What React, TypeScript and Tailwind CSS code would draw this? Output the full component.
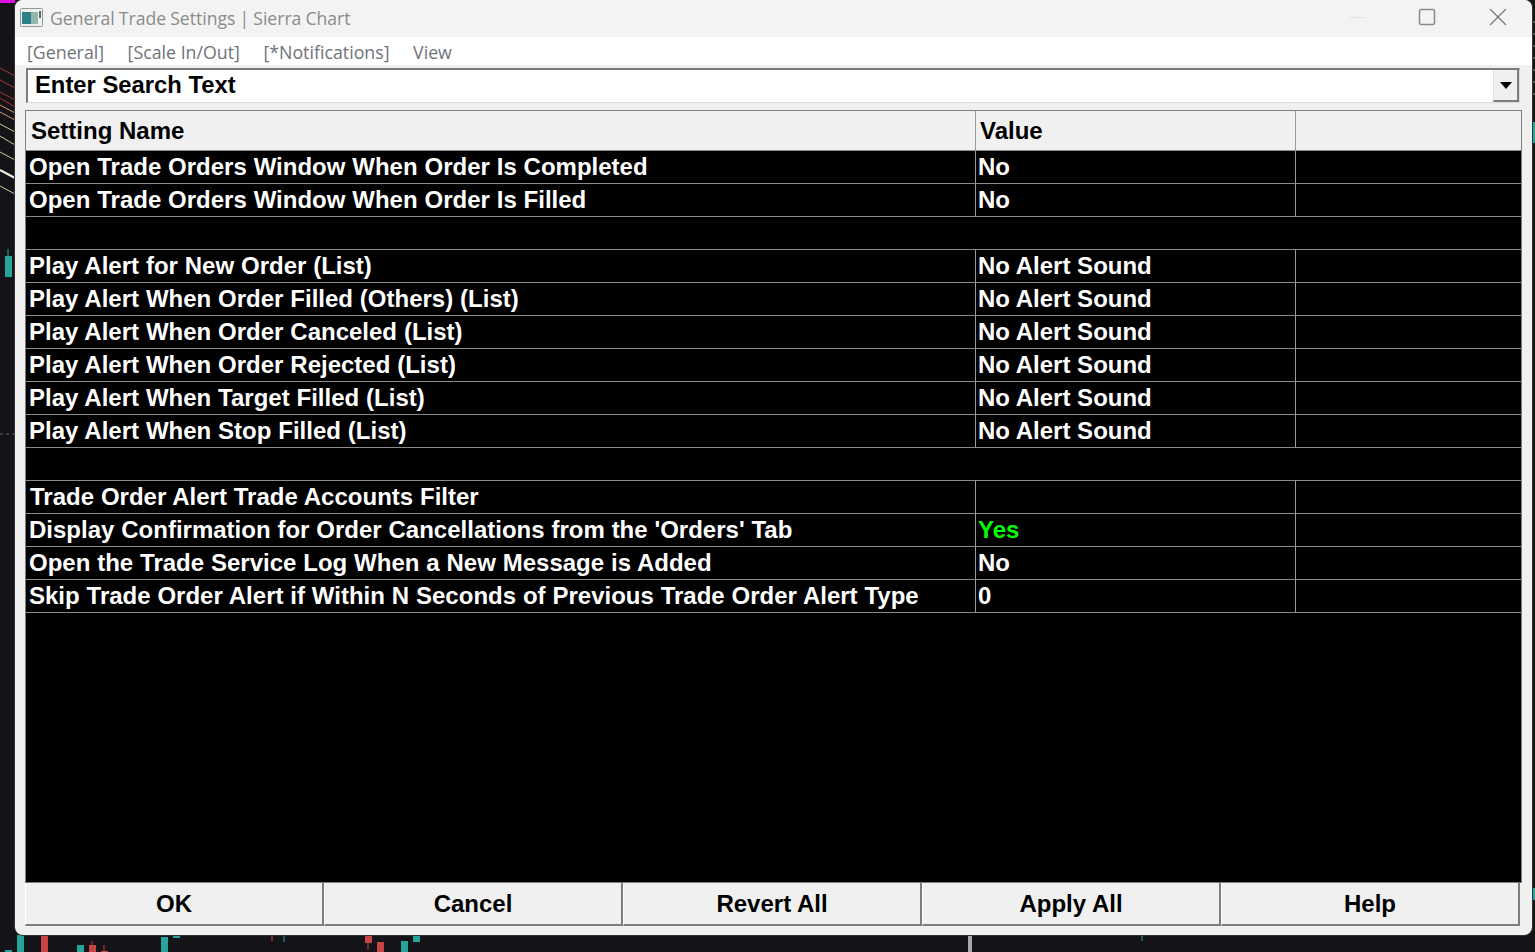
import { Square, X } from 'lucide-react';

type Row = { name: string; value?: string; green?: boolean; indent?: boolean };

const rows: (Row | null)[] = [
  { name: 'Open Trade Orders Window When Order Is Completed', value: 'No' },
  { name: 'Open Trade Orders Window When Order Is Filled', value: 'No' },
  null,
  { name: 'Play Alert for New Order (List)', value: 'No Alert Sound' },
  { name: 'Play Alert When Order Filled (Others) (List)', value: 'No Alert Sound' },
  { name: 'Play Alert When Order Canceled (List)', value: 'No Alert Sound' },
  { name: 'Play Alert When Order Rejected (List)', value: 'No Alert Sound' },
  { name: 'Play Alert When Target Filled (List)', value: 'No Alert Sound' },
  { name: 'Play Alert When Stop Filled (List)', value: 'No Alert Sound' },
  null,
  { name: 'Trade Order Alert Trade Accounts Filter', indent: true },
  { name: "Display Confirmation for Order Cancellations from the 'Orders' Tab", value: 'Yes', green: true },
  { name: 'Open the Trade Service Log When a New Message is Added', value: 'No' },
  { name: 'Skip Trade Order Alert if Within N Seconds of Previous Trade Order Alert Type', value: '0' },
];

const buttons = ['OK', 'Cancel', 'Revert All', 'Apply All', 'Help'];

// chart bits peeking out around the dialog
function ChartBackdrop() {
  return (
    <svg className="absolute inset-0" width="1535" height="952">
      <path d="M0 0 H15 V3 H0 Z" fill="#e010e0" />
      <path d="M0 68 L15 76 M0 80 L15 88 M0 92 L15 100 M0 98 L15 107" stroke="#a33" strokeWidth="1" />
      <path d="M0 105 L15 113 M0 112 L15 120" stroke="#d96" strokeWidth="1" />
      <path d="M0 124 L15 132 M0 136 L15 145 M0 152 L15 160 M0 186 L15 194" stroke="#cc9" strokeWidth="1" />
      <path d="M0 170 L15 178" stroke="#eed" strokeWidth="2" />
      <rect x="5" y="256" width="7" height="21" fill="#26a69a" />
      <path d="M8 249 V256" stroke="#26a69a" />
      <path d="M0 434 H15" stroke="#666" strokeDasharray="3 3" />
      <rect x="5" y="950" width="7" height="2" fill="#26a69a" />
      <rect x="17" y="935" width="7" height="17" fill="#26a69a" />
      <rect x="41" y="935" width="7" height="17" fill="#c94444" />
      <rect x="77" y="945" width="7" height="7" fill="#26a69a" />
      <rect x="89" y="945" width="7" height="7" fill="#c94444" />
      <path d="M92 941 V945 M104 945 V951" stroke="#c94444" />
      <rect x="101" y="951" width="7" height="1" fill="#c94444" />
      <rect x="161" y="937" width="7" height="15" fill="#26a69a" />
      <rect x="173" y="935" width="7" height="3" fill="#26a69a" />
      <path d="M272 935 V941" stroke="#c94444" />
      <path d="M284 935 V942" stroke="#26a69a" />
      <rect x="365" y="935" width="7" height="8" fill="#c94444" />
      <path d="M368 943 V950" stroke="#c94444" />
      <rect x="377" y="942" width="7" height="10" fill="#c94444" />
      <rect x="401" y="941" width="7" height="11" fill="#26a69a" />
      <rect x="413" y="935" width="7" height="7" fill="#26a69a" />
      <rect x="968" y="935" width="4" height="17" fill="#aaa" />
      <path d="M1142 935 V941" stroke="#26a69a" />
      <rect x="1533" y="122" width="2" height="21" fill="#26a69a" />
      <rect x="1533" y="888" width="2" height="12" fill="#26a69a" />
      <path d="M1533 22 H1535 M1533 34 H1535 M1533 46 H1535 M1533 58 H1535 M1533 70 H1535 M1533 82 H1535 M1533 94 H1535" stroke="#b96" />
    </svg>
  );
}

export default function App() {
  return (
    <div className="relative w-[1535px] h-[952px] overflow-hidden bg-[#131318] font-['Liberation_Sans',sans-serif]">
      <ChartBackdrop />
      <div className="relative ml-[15px] w-[1517px] h-[935px] flex flex-col bg-[#f0f0f0] rounded-lg shadow-[0_0_0_1px_#333]">
        {/* title bar */}
        <div className="h-[37px] shrink-0 flex items-center bg-[#f3f3f3] rounded-t-lg pl-[5px]">
          <svg width="23" height="19" viewBox="0 0 23 19" className="mb-[3px]">
            <rect x="0.5" y="0.5" width="22" height="18" rx="1" fill="#eef1f0" stroke="#8f9a98" />
            <rect x="2" y="4" width="9" height="12" fill="#2f7f86" />
            <rect x="11" y="4" width="7" height="12" fill="#8fb7ae" />
            <rect x="19" y="3" width="2" height="7" fill="#5d6a6a" />
          </svg>
          <span className="ml-[7px] font-['Open_Sans',sans-serif] text-[17.6px] [word-spacing:-0.5px] text-[#8b8b8b]">General Trade Settings | Sierra Chart</span>
          <div className="ml-auto flex items-center mb-[3px] mr-[19px]">
            <div className="w-[16px] h-px bg-[#e2e2e2] mr-[51px]" />
            <Square size={20} strokeWidth={1.8} className="text-[#8a8a8a] mr-[46px]" />
            <X size={30} strokeWidth={1} className="text-[#777]" />
          </div>
        </div>

        {/* menu */}
        <div className="h-[28px] shrink-0 flex items-center gap-[23.5px] bg-white pl-[12px] pt-[2px] font-['Open_Sans',sans-serif] text-[17.8px] text-[#6f7378]">
          <span>[General]</span>
          <span>[Scale In/Out]</span>
          <span>[*Notifications]</span>
          <span>View</span>
        </div>

        {/* search combo */}
        <div className="mt-[3px] ml-[11px] w-[1494px] h-[35px] shrink-0 flex bg-white border-t-2 border-l-2 border-t-[#7d7d7d] border-l-[#7d7d7d] border-b border-r border-b-[#dcdcdc] border-r-[#dcdcdc]">
          <span className="pl-[7px] text-[23.8px] leading-[30px] font-bold text-black">Enter Search Text</span>
          <div className="ml-auto w-[26px] flex items-center justify-center bg-[#f0f0f0] border-r-2 border-b-2 border-r-[#7d7d7d] border-b-[#7d7d7d] border-l border-l-[#e0e0e0]">
            <div className="w-0 h-0 border-x-[6px] border-x-transparent border-t-[7px] border-t-black" />
          </div>
        </div>

        {/* grid */}
        <div className="mt-[7px] ml-[10px] w-[1497px] h-[773px] shrink-0 flex flex-col bg-black border border-[#7d7d7d]">
          <div className="h-[40px] shrink-0 flex bg-[#f0f0f0] text-[24px] font-bold text-black border-b border-b-[#8a8a8a]">
            <div className="w-[949px] pl-[5px] leading-[39px]">Setting Name</div>
            <div className="w-[320px] pl-[4px] leading-[39px] border-l border-l-[#9a9a9a]">Value</div>
            <div className="flex-1 border-l border-l-[#9a9a9a]" />
          </div>
          {rows.map((row, i) =>
            row ? (
              <div key={i} className="h-[33px] shrink-0 flex text-[24px] font-bold text-white border-b border-b-[#8a8a8a]">
                <div className={`w-[949px] leading-[31px] [word-spacing:0.2px] ${row.indent ? 'pl-[4px]' : 'pl-[3px]'}`}>{row.name}</div>
                <div className={`w-[320px] pl-[2px] leading-[31px] border-l border-l-[#9a9a9a] ${row.green ? 'text-[#00ff00]' : ''}`}>{row.value}</div>
                <div className="flex-1 border-l border-l-[#9a9a9a]" />
              </div>
            ) : (
              <div key={i} className="h-[33px] shrink-0 border-b border-b-[#8a8a8a]" />
            )
          )}
        </div>

        {/* buttons */}
        <div className="ml-[10px] w-[1495px] h-[43px] shrink-0 flex">
          {buttons.map((b) => (
            <button
              key={b}
              className="flex-1 h-full bg-[#f0f0f0] text-[24px] font-bold text-black border-r-2 border-b-2 border-r-[#7d7d7d] border-b-[#7d7d7d] border-l border-l-white"
            >
              {b}
            </button>
          ))}
        </div>
      </div>
    </div>
  );
}
